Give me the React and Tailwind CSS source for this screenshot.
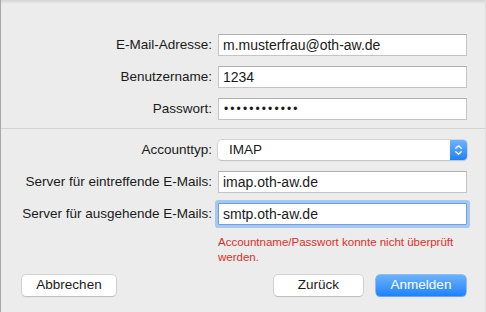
import React from "react";

const font = { fontFamily: '"Liberation Sans", Arial, sans-serif' };

function Label({ children }) {
  return (
    <div className="w-[212px] shrink-0 text-right text-[13.5px] text-[#1a1a1a] leading-none pr-[1px]">
      {children}
    </div>
  );
}

function Field({ children, focus }) {
  return (
    <div
      className={
        "ml-[5px] w-[249px] h-[22px] bg-white flex items-center px-[4px] text-[14px] text-[#1a1a1a] " +
        (focus
          ? "border border-[#6f9fd8] rounded-[1px] shadow-[0_0_0_3px_#a4c8f2]"
          : "border border-[#c4c4c4] border-t-[#b0b0b0]")
      }
    >
      {children}
    </div>
  );
}

function Row({ label, children, className = "" }) {
  return (
    <div className={"flex items-center " + className}>
      <Label>{label}</Label>
      {children}
    </div>
  );
}

export default function App() {
  return (
    <div
      style={font}
      className="w-[486px] h-[312px] bg-[#ececec] relative overflow-hidden border-l border-l-[#a8a8a8] border-r border-r-[#dedede]"
    >
      <div className="absolute top-0 left-0 right-0 h-[4px] bg-gradient-to-b from-[#d4d4d4] to-[#ececec]" />
      <div className="pt-[34px] flex flex-col">
        <Row label="E-Mail-Adresse:">
          <Field>m.musterfrau@oth-aw.de</Field>
        </Row>
        <Row label="Benutzername:" className="mt-[10px]">
          <Field>1234</Field>
        </Row>
        <Row label="Passwort:" className="mt-[10px]">
          <Field>
            <span className="tracking-[2.1px] text-[12px] pl-[1px]">••••••••••••</span>
          </Field>
        </Row>
        <div className="mt-[8px] h-px bg-[#d3d3d3]" />
        <Row label="Accounttyp:" className="mt-[11px]">
          <div className="ml-[5px] w-[249px] h-[20px] bg-white rounded-[4px] flex items-stretch shadow-[0_0_0_0.5px_#bdbdbd,0_1px_1px_#c8c8c8] overflow-hidden">
            <div className="flex-1 flex items-center pl-[11px] text-[13.5px] text-[#1a1a1a]">IMAP</div>
            <div className="w-[17px] bg-gradient-to-b from-[#6db4fc] to-[#1b80fa] flex items-center justify-center">
              <svg width="9" height="12" viewBox="0 0 9 12" fill="none" stroke="white" strokeWidth="1.4" strokeLinecap="round" strokeLinejoin="round">
                <path d="M1.8 4.2 L4.5 1.7 L7.2 4.2" />
                <path d="M1.8 7.8 L4.5 10.3 L7.2 7.8" />
              </svg>
            </div>
          </div>
        </Row>
        <Row label="Server für eintreffende E-Mails:" className="mt-[11px]">
          <Field>imap.oth-aw.de</Field>
        </Row>
        <Row label="Server für ausgehende E-Mails:" className="mt-[10px]">
          <Field focus>smtp.oth-aw.de</Field>
        </Row>
        <div className="ml-[217px] mt-[10px] text-[11.5px] leading-[15px] text-[#dc2f2a]">
          Accountname/Passwort konnte nicht überprüft
          <br />
          werden.
        </div>
        <div className="mt-[10px] flex items-center pl-[21px] pr-[19px]">
          <button className="w-[94px] h-[21px] bg-white rounded-[4px] text-[13.5px] text-[#1a1a1a] shadow-[0_0_0_0.5px_#b8b8b8,0_1px_1px_#c4c4c4]">
            Abbrechen
          </button>
          <div className="flex-1" />
          <button className="w-[89px] h-[21px] bg-white rounded-[4px] text-[13.5px] text-[#1a1a1a] shadow-[0_0_0_0.5px_#b8b8b8,0_1px_1px_#c4c4c4]">
            Zurück
          </button>
          <button className="ml-[13px] w-[90px] h-[21px] rounded-[4px] text-[13.5px] text-white bg-gradient-to-b from-[#69b1fb] to-[#1a82fb] shadow-[0_0_0_0.5px_#3d8ff0,0_1px_1px_#9fb8d8]">
            Anmelden
          </button>
        </div>
      </div>
    </div>
  );
}
